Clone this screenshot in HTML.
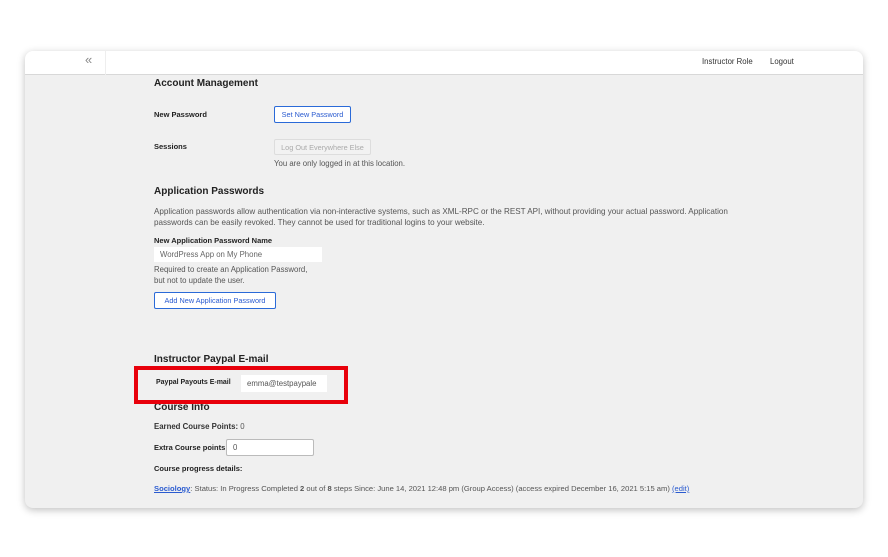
<!DOCTYPE html>
<html><head><meta charset="utf-8"><style>
*{margin:0;padding:0;box-sizing:border-box}
body{width:888px;height:557px;background:#fff;font-family:"Liberation Sans",sans-serif;position:relative;overflow:hidden;color:#333}
.card{position:absolute;left:25px;top:51px;width:838px;height:457px;background:#f0f0f0;border-radius:8px;box-shadow:0 2px 8px rgba(0,0,0,.25);overflow:hidden}
.hdr{position:absolute;left:0;top:0;width:838px;height:24px;background:#fff;border-bottom:1px solid #d8d8d8}
.a{position:absolute;white-space:nowrap}
h2{position:absolute;font-size:10px;font-weight:bold;color:#222;white-space:nowrap}
.lb{font-size:7.5px;font-weight:bold;color:#222}
.t{font-size:7.8px;color:#555}
.btn{position:absolute;background:#fff;border:1px solid #2a6ad8;border-radius:2px;color:#2a5bd0;font-size:7.3px;display:flex;align-items:center;justify-content:center}
.inp{position:absolute;background:#fff;font-size:7.8px;color:#555;padding-left:6px;display:flex;align-items:center}
</style></head><body>
<div class="card">
 <div class="hdr">
  <div class="a" style="left:60px;top:1px;font-size:13px;color:#888">«</div>
  <div class="a" style="left:80px;top:0;width:1px;height:24px;background:#eee"></div>
  <div class="a" style="left:677px;top:6px;font-size:7.8px;color:#333">Instructor Role</div>
  <div class="a" style="left:745px;top:6px;font-size:7.8px;color:#333">Logout</div>
 </div>
 <h2 style="left:129px;top:27px">Account Management</h2>
 <div class="a lb" style="left:129px;top:59px">New Password</div>
 <div class="btn" style="left:249px;top:55px;width:77px;height:17px">Set New Password</div>
 <div class="a lb" style="left:129px;top:91px">Sessions</div>
 <div class="btn" style="left:249px;top:88px;width:97px;height:16px;border-color:#ddd;color:#aaa;background:#f2f2f2">Log Out Everywhere Else</div>
 <div class="a t" style="left:249px;top:108px">You are only logged in at this location.</div>
 <h2 style="left:129px;top:135px">Application Passwords</h2>
 <div class="a t" style="left:129px;top:155px;line-height:11px;font-size:8.1px">Application passwords allow authentication via non-interactive systems, such as XML-RPC or the REST API, without providing your actual password. Application<br>passwords can be easily revoked. They cannot be used for traditional logins to your website.</div>
 <div class="a lb" style="left:129px;top:185px">New Application Password Name</div>
 <div class="inp" style="left:129px;top:196px;width:168px;height:15px;color:#666">WordPress App on My Phone</div>
 <div class="a t" style="left:129px;top:214px;line-height:10.5px">Required to create an Application Password,<br>but not to update the user.</div>
 <div class="btn" style="left:129px;top:241px;width:122px;height:17px">Add New Application Password</div>
 <h2 style="left:129px;top:303px">Instructor Paypal E-mail</h2>
 <div class="a lb" style="left:131px;top:328px;font-size:7px">Paypal Payouts E-mail</div>
 <div class="inp" style="left:216px;top:324px;width:86px;height:17px;overflow:hidden">emma@testpaypale</div>
 <h2 style="left:129px;top:351px">Course Info</h2>
 <div class="a t" style="left:129px;top:371px"><b style="color:#333">Earned Course Points:</b> 0</div>
 <div class="a lb" style="left:129px;top:392px">Extra Course points</div>
 <div class="inp" style="left:201px;top:388px;width:88px;height:17px;border:1px solid #bbb;border-radius:2px">0</div>
 <div class="a lb" style="left:129px;top:413px">Course progress details:</div>
 <div class="a t" style="left:129px;top:433px;font-size:7.6px"><b style="color:#2a5bd0;text-decoration:underline">Sociology</b>: Status: In Progress Completed <b>2</b> out of <b>8</b> steps Since: June 14, 2021 12:48 pm (Group Access) (access expired December 16, 2021 5:15 am) <span style="color:#2a5bd0;text-decoration:underline">(edit)</span></div>
</div>
<div style="position:absolute;left:134px;top:366px;width:214px;height:38px;border:4px solid #e8000b"></div>
</body></html>
